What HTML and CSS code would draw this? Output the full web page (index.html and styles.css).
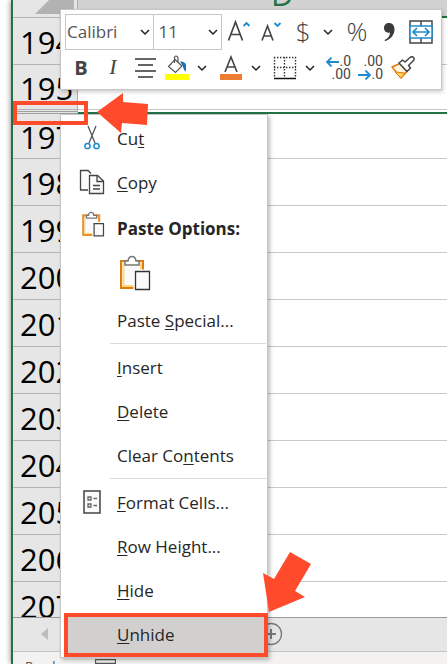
FILE: index.html
```html
<!DOCTYPE html>
<html lang="en">
<head>
<meta charset="UTF-8">
<meta name="viewport" content="width=device-width, initial-scale=1.0">
<title>Unhide Rows</title>
<link rel="stylesheet" href="styles.css">
</head>
<body>
<div class="workbook">
  <div class="sheet">
    <table>
      <thead>
        <tr>
          <th class="corner"><svg width="64" height="17"><path d="M22 14 36 0H61V14Z" fill="#b2b2b2"/></svg></th>
          <th class="col-head"><div>D</div></th>
        </tr>
      </thead>
      <tbody>
        <tr><th>194</th><td></td></tr>
        <tr class="short"><th>195</th><td></td></tr>
        <tr class="hidden-row"><th></th><td></td></tr>
        <tr class="short"><th>197</th><td></td></tr>
        <tr><th>198</th><td></td></tr>
        <tr><th>199</th><td></td></tr>
        <tr><th>200</th><td></td></tr>
        <tr><th>201</th><td></td></tr>
        <tr><th>202</th><td></td></tr>
        <tr><th>203</th><td></td></tr>
        <tr><th>204</th><td></td></tr>
        <tr><th>205</th><td></td></tr>
        <tr><th>206</th><td></td></tr>
        <tr><th>207</th><td></td></tr>
      </tbody>
    </table>
  </div>
  <div class="tab-bar">
    <button class="tab-btn" aria-label="Previous sheet"><svg width="8" height="12"><path d="M7 0V12L0 6Z" fill="#bcbcbc"/></svg></button>
    <button class="tab-btn" aria-label="New sheet"><svg width="24" height="24" fill="none" stroke="#7a7a7a"><circle cx="12" cy="12" r="10.5" stroke-width="1.3"/><path d="M12 7V17M7 12H17" stroke-width="2"/></svg></button>
  </div>
  <div class="status-bar">
    <span>Ready</span>
    <svg width="21" height="16" fill="none" stroke="#555"><path d="M.5.5H20.5V15H.5ZM1 4.500H20M5 8H16" stroke-width="1.3"/></svg>
  </div>
</div>

<div class="mini-toolbar">
  <div class="tool-row">
    <label class="pick pick-font">
      <select aria-label="Font"><option>Calibri</option></select>
      <svg width="10" height="7"><path d="M1 1 5 5 9 1"/></svg>
    </label>
    <label class="pick pick-size">
      <select aria-label="Font size"><option>11</option></select>
      <svg width="10" height="7"><path d="M1 1 5 5 9 1"/></svg>
    </label>
    <button class="tool" aria-label="Increase font size"><svg width="24" height="24" fill="none"><path d="M1.500 20.500 8.500 2 15.500 20.500M4 14.500H13" stroke="#444" stroke-width="1.700"/><path d="M16.500 6 19.500 3 22.500 6" stroke="#1e8bcd" stroke-width="1.800"/></svg></button>
    <button class="tool" aria-label="Decrease font size"><svg width="24" height="24" fill="none"><path d="M3 20.500 8.500 6 14 20.500M5 16H12" stroke="#444" stroke-width="1.600"/><path d="M15.500 3 18.500 6 21.500 3" stroke="#1e8bcd" stroke-width="1.800"/></svg></button>
    <button class="tool dollar">$</button>
    <button class="chev" aria-label="Currency formats"><svg width="10" height="7"><path d="M1 1 5 5 9 1"/></svg></button>
    <button class="tool percent">%</button>
    <button class="tool" aria-label="Comma style"><svg width="12" height="20"><path d="M6 1C9 1 11.500 3 11.500 7.500 11.500 13 7 18 2 19L1.500 18C5 16.500 7 14 7 10.500 3.500 11.500 1 9 1 6 1 3 3 1 6 1Z" fill="#3b3b3b"/></svg></button>
    <button class="tool" aria-label="Merge and center"><svg width="24" height="24" fill="none"><path d="M1 1H23V23H1ZM12 1V6M12 18V23" stroke="#444" stroke-width="1.500"/><rect x="1" y="6" width="22" height="12" fill="#fff" stroke="#1e8bcd" stroke-width="1.500"/><path d="M4 12H20M8 8 4 12 8 16M16 8 20 12 16 16" stroke="#1e8bcd" stroke-width="1.700"/></svg></button>
  </div>
  <div class="tool-row">
    <button class="tool bold">B</button>
    <button class="tool italic">I</button>
    <button class="tool" aria-label="Center"><svg width="22" height="22" stroke="#333" stroke-width="1.500"><path d="M1 2H22M4 8H19M1 14H22M4 20H19"/></svg></button>
    <button class="tool" aria-label="Fill color"><svg width="26" height="26" fill="none"><path d="M11 4.500 18 11 11.500 17.500 4.500 11.500Z" fill="#fff" stroke="#555" stroke-width="1.200"/><path d="M10.500 8V3Q10.500 1 12 1T14 3V7" stroke="#555" stroke-width="1.200"/><path d="M16 6.500Q21 6 22 10V16.500Q19.500 15.500 19 11.500Z" fill="#1a73b0"/><path d="M1 19H25V25H1Z" fill="#ff0"/></svg></button>
    <button class="chev" aria-label="Fill colors"><svg width="10" height="7"><path d="M1 1 5 5 9 1"/></svg></button>
    <button class="tool" aria-label="Font color"><svg width="24" height="26"><path d="M6 17 12 2 18 17M8 12H16" fill="none" stroke="#444" stroke-width="1.600"/><path d="M1 19H23V25H1Z" fill="#ed7d31"/></svg></button>
    <button class="chev" aria-label="Font colors"><svg width="10" height="7"><path d="M1 1 5 5 9 1"/></svg></button>
    <button class="tool" aria-label="Bottom border"><svg width="24" height="24" fill="none" stroke="#333"><path d="M1 1.500H23M1 11.500H23M1.500 1V21M11.500 1V21M22.500 1V21" stroke-width="1.400" stroke-dasharray="1.400 1.600"/><path d="M1 22.500H23" stroke="#111" stroke-width="1.500"/></svg></button>
    <button class="chev" aria-label="Borders"><svg width="10" height="7"><path d="M1 1 5 5 9 1"/></svg></button>
    <button class="tool decimal" aria-label="Increase decimal">
      <span><svg width="13" height="10"><path d="M13 5H1M5.500.500 1 5 5.500 9.500"/></svg>.0</span>
      <span>.00</span>
    </button>
    <button class="tool decimal" aria-label="Decrease decimal">
      <span>.00</span>
      <span><svg width="13" height="10"><path d="M0 5H12M7.500.500 12 5 7.500 9.500"/></svg>.0</span>
    </button>
    <button class="tool" aria-label="Format painter"><svg width="26" height="24" stroke-linejoin="round"><path d="M2 11 10 7.500 17 15.500 11 22Z" fill="#fff4dc" stroke="#e07b10" stroke-width="1.500"/><path d="M5 16 15 17 11 22Z" fill="#ffd35a" stroke="#e07b10" stroke-width="1"/><path d="M9 7 12.500 4 15 6 20 1.500Q22 0 23.500 1.500T23 5L18.500 9.500 20.500 12 17 15.500Z" fill="#fff" stroke="#444" stroke-width="1.500"/></svg></button>
  </div>
</div>

<div class="context-menu">
  <button class="item">
    <svg width="16" height="26" fill="none"><path d="M4 1 11 18M12 1 5 18" stroke="#555" stroke-width="1.300"/><circle cx="3.500" cy="21" r="2.600" stroke="#1e8bcd" stroke-width="1.500"/><circle cx="12.500" cy="21" r="2.600" stroke="#1e8bcd" stroke-width="1.500"/></svg>
    <span>Cu<u>t</u></span>
  </button>
  <button class="item">
    <svg width="26" height="26" fill="#fafafa" stroke="#444" stroke-width="1.300"><path d="M9 21H1.500V1.500H9L12 4.500"/><path d="M10.500 6.500H18.500L24.500 12V24.500H10.500Z"/><path d="M18 6.500V12.500H24M14 16.500H21M14 20H21" fill="none"/></svg>
    <span><u>C</u>opy</span>
  </button>
  <div class="item heading">
    <svg width="24" height="26" viewBox="0 0 32 36" fill="none"><path d="M2.500 6H24.500V33H2.500Z" fill="#fafafa" stroke="#e8912d" stroke-width="3"/><path d="M5 9V31H16" stroke="#ffe08f" stroke-width="1.500"/><path d="M7 10V6H10Q10 2 13.500 2T17 6H21V10Z" fill="#fff" stroke="#777" stroke-width="1.700"/><path d="M15 15H32V36H15Z" fill="#fff"/><path d="M17.500 17.500H30.500V34.500H17.500Z" fill="#fafafa" stroke="#444" stroke-width="1.700"/></svg>
    <span>Paste Options:</span>
  </div>
  <button class="paste-btn" aria-label="Paste">
    <svg width="32" height="36" fill="none"><path d="M2 6H24V33H2Z" fill="#fafafa" stroke="#e07b10" stroke-width="2"/><path d="M4.500 8V31H15M22 8V14" stroke="#ffd77a" stroke-width="2"/><path d="M6 10V6H9Q9.500 1.500 13 1.500T17 6H20V10Z" fill="#fff" stroke="#777" stroke-width="1.500"/><path d="M14.500 14.500H32V36H14.500Z" fill="#fff"/><path d="M16.500 16.500H30.500V34.500H16.500Z" fill="#fafafa" stroke="#333" stroke-width="1.300"/></svg>
  </button>
  <button class="item"><i></i><span>Paste <u>S</u>pecial...</span></button>
  <hr>
  <button class="item"><i></i><span><u>I</u>nsert</span></button>
  <button class="item"><i></i><span><u>D</u>elete</span></button>
  <button class="item"><i></i><span>Clear Co<u>n</u>tents</span></button>
  <hr>
  <button class="item">
    <svg width="18" height="24" fill="none"><path d="M1 1H17V23H1Z" fill="#fafafa" stroke="#444" stroke-width="1.500"/><path d="M5 7H8V10H5ZM5 14H8V17H5ZM10.500 8.500H14M10.500 15.500H14" stroke="#666" stroke-width="1.300"/></svg>
    <span><u>F</u>ormat Cells...</span>
  </button>
  <button class="item"><i></i><span><u>R</u>ow Height...</span></button>
  <button class="item"><i></i><span><u>H</u>ide</span></button>
  <button class="item marked"><i></i><span><u>U</u>nhide</span></button>
</div>

<!-- callouts drawn over the sheet -->
<div class="callout-box"></div>
<svg class="callout-arrow arrow-rows" width="52" height="42"><path d="M1 20 27 1V10L52 12 51 33 26 31 25 41Z"/></svg>
<svg class="callout-arrow arrow-unhide" width="48" height="60"><path d="M6 60 0 21 11 27 27 0 48 12 32 39 42 45Z"/></svg>
</body>
</html>
```
FILE: styles.css
```css
* {
  box-sizing: border-box;
}
body {
  margin: 0;
  height: 100vh;
  overflow: hidden;
  position: relative;
  background: #fff;
  color: #262626;
  font-family: "Open Sans", "Noto Sans", sans-serif;
  font-size: 17px;
}
button {
  margin: 0;
  padding: 0;
  border: none;
  background: none;
  color: inherit;
  font: inherit;
}
svg {
  display: block;
  flex-shrink: 0;
}

/* sheet */
.workbook {
  height: 100%;
  margin-left: 11px;
  border-left: 2px solid #217346;
  box-shadow: 0 0 6px rgba(0, 0, 0, 0.5);
  display: flex;
  flex-direction: column;
}
.sheet {
  flex: 1;
  min-height: 0;
  overflow: hidden;
  background: #fff;
}
table {
  width: 100%;
  border-spacing: 0;
  table-layout: fixed;
}
th, td {
  height: 47px;
  padding: 0;
  border-bottom: 1px solid #c8c8c8;
}
th {
  width: 65px;
  padding: 2px 0 0 7px;
  background: #e6e6e6;
  border-right: 1px solid #ababab;
  border-bottom-color: #b4b4b4;
  color: #000;
  font-size: 31px;
  font-weight: 400;
  line-height: 40px;
  text-align: left;
}
.short th, .short td {
  height: 45px;
}
.hidden-row th {
  height: 4px;
  padding: 0;
  border-bottom: 3px double #a0a0a0;
}
.hidden-row td {
  height: 4px;
  border-bottom: 2px solid #217346;
}
th.corner {
  height: 18px;
  padding: 0;
}
th.col-head {
  width: auto;
  height: 18px;
  padding: 0;
  background: #d2d2d2;
  border-right: none;
  border-bottom: 2px solid #217346;
  color: #217346;
}
.col-head div {
  height: 16px;
  padding: 0 0 6px 193px;
  overflow: hidden;
  display: flex;
  align-items: flex-end;
  line-height: 31px;
}
.tab-bar {
  height: 35px;
  padding: 0 166px 2px 28px;
  display: flex;
  align-items: center;
  gap: 210px;
  background: #e6e6e6;
  border-top: 1px solid #999;
  border-bottom: 1px solid #c4c4c4;
}
.status-bar {
  height: 12px;
  padding: 7px 12px 0;
  display: flex;
  gap: 33px;
  overflow: hidden;
  background: #f3f2f1;
  color: #555;
  font-size: 13px;
  line-height: 14px;
}

/* floating toolbar */
.mini-toolbar {
  position: absolute;
  top: 9px;
  left: 60px;
  padding: 4px;
  width: 382px;
  height: 81px;
  background: #fff;
  border: 1px solid #c6c6c6;
  box-shadow: 1px 2px 4px rgba(0, 0, 0, 0.2);
}
.tool-row {
  height: 36px;
  display: flex;
  align-items: center;
}
.pick {
  position: relative;
  height: 36px;
}
.pick-font {
  width: 90px;
}
.pick-size {
  width: 68px;
  margin-right: 1px;
}
.pick select {
  appearance: none;
  width: 100%;
  height: 100%;
  padding: 0 1px 2px;
  background: #fff;
  border: 1px solid #c6c6c6;
  border-radius: 0;
  color: #555;
  font: inherit;
}
.pick-size select {
  padding: 0 4px 2px;
  border-left: none;
}
.pick svg {
  position: absolute;
  right: 4px;
  top: 15px;
}
.pick path, .chev path {
  fill: none;
  stroke: #222;
  stroke-width: 1.5;
}
.tool {
  width: 32px;
  height: 32px;
  display: flex;
  align-items: center;
  justify-content: center;
  flex-shrink: 0;
  color: #444;
}
.chev {
  width: 18px;
  height: 32px;
  margin-right: 4px;
  display: flex;
  align-items: center;
  justify-content: center;
}
.dollar, .percent {
  padding-bottom: 2px;
  font-size: 26px;
  font-weight: 300;
}
.bold {
  padding-bottom: 2px;
  font-size: 20px;
  font-weight: 700;
}
.italic {
  padding-bottom: 2px;
  font-family: "Liberation Serif", serif;
  font-size: 22px;
  font-style: italic;
}
.decimal {
  flex-direction: column;
  align-items: flex-end;
  padding-right: 4px;
  font-family: Roboto, sans-serif;
  font-size: 14px;
  line-height: 13px;
}
.decimal span {
  display: flex;
  align-items: center;
}
.decimal path {
  fill: none;
  stroke: #1e8bcd;
  stroke-width: 1.8;
}

/* right-click menu */
.context-menu {
  position: absolute;
  top: 114px;
  left: 60px;
  width: 208px;
  padding: 2px 1px 0 3px;
  background: #fff;
  border: 1px solid #c6c6c6;
  box-shadow: 2px 2px 4px rgba(0, 0, 0, 0.25);
}
.item {
  width: 100%;
  height: 44px;
  padding-bottom: 2px;
  display: grid;
  grid-template-columns: 53px 1fr;
  align-items: center;
  text-align: left;
  white-space: nowrap;
}
.item svg {
  margin-left: 28px;
  transform: translateX(-50%);
}
.heading {
  height: 46px;
  padding-bottom: 0;
  font-weight: 700;
}
.heading svg {
  margin: 0 0 8px 29px;
}
u {
  text-decoration-thickness: 1px;
  text-underline-offset: 2px;
}
.paste-btn {
  height: 48px;
  padding: 0 0 4px 55px;
  display: flex;
  align-items: center;
}
hr {
  height: 1px;
  margin: 0 0 2px 46px;
  border: none;
  background: #dadada;
}
.marked {
  position: relative;
  background: #d2d0ce;
}
.marked::after {
  content: "";
  position: absolute;
  inset: 0 -2px 0 0;
  border: 4px solid #ff4b2b;
}

/* callouts */
.callout-box {
  position: absolute;
  top: 101px;
  left: 13px;
  width: 75px;
  height: 24px;
  border: 4px solid #ff4b2b;
}
.callout-arrow {
  position: absolute;
  fill: #ff4b2b;
}
.arrow-rows {
  top: 92px;
  left: 96px;
}
.arrow-unhide {
  top: 552px;
  left: 263px;
}
```
